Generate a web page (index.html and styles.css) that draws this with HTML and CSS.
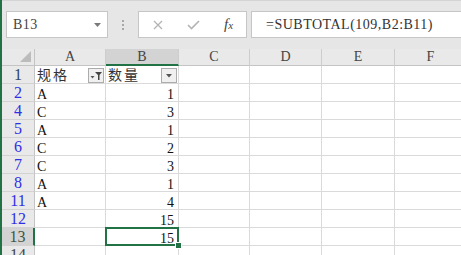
FILE: index.html
```html
<!DOCTYPE html>
<html lang="zh-CN">
<head>
    <meta charset="UTF-8">
    <title>筛选求和</title>
    <link rel="stylesheet" href="styles.css">
</head>
<body>
<div id="app">
    <div id="toolbar">
        <div id="namebox">
            <span>B13</span>
            <svg width="7" height="4" viewBox="0 0 7 4"><polygon points="0,0 7,0 3.5,4" fill="#7a7a7a"/></svg>
        </div>
        <div id="grip">
            <svg width="2" height="10" viewBox="0 0 2 10"><rect y="0" width="2" height="2" fill="#a8a8a8"/><rect y="4" width="2" height="2" fill="#a8a8a8"/><rect y="8" width="2" height="2" fill="#a8a8a8"/></svg>
        </div>
        <div id="fxbox">
            <svg class="cancel" width="10" height="10" viewBox="0 0 10 10"><path d="M1 1 L9 9 M9 1 L1 9" stroke="#b4b4b4" stroke-width="1.3" fill="none"/></svg>
            <svg class="enter" width="13" height="10" viewBox="0 0 13 10"><path d="M1 5 L4.5 8.5 L12 1" stroke="#b4b4b4" stroke-width="1.6" fill="none"/></svg>
            <span class="fx"><i>f</i><i class="fx-x">x</i></span>
        </div>
        <div id="formula">=SUBTOTAL(109,B2:B11)</div>
    </div>

    <div id="sheet">
        <div class="corner">
            <svg width="12" height="12" viewBox="0 0 12 12"><polygon points="11,0 11,11 0,11" fill="#bcbcbc"/></svg>
        </div>
        <div class="colhead">A</div>
        <div class="colhead selected">B</div>
        <div class="colhead">C</div>
        <div class="colhead">D</div>
        <div class="colhead">E</div>
        <div class="colhead">F</div>

        <div class="rowhead first">1</div>
        <div class="cell cjk filter-cell">规格<span class="fbtn"><svg width="14" height="13" viewBox="0 0 14 13"><polygon points="1.5,7 5.5,7 3.5,9.5" fill="#555"/><polygon points="6,3 13,3 10.5,6 10.5,11 9,11 9,6" fill="#444"/></svg></span></div>
        <div class="cell cjk filter-cell">数量<span class="fbtn"><svg width="14" height="13" viewBox="0 0 14 13"><polygon points="4,5 10,5 7,8.5" fill="#555"/></svg></span></div>
        <div class="cell"></div><div class="cell"></div><div class="cell"></div><div class="cell"></div>

        <div class="rowhead">2</div>
        <div class="cell">A</div><div class="cell num">1</div>
        <div class="cell"></div><div class="cell"></div><div class="cell"></div><div class="cell"></div>

        <div class="rowhead">4</div>
        <div class="cell">C</div><div class="cell num">3</div>
        <div class="cell"></div><div class="cell"></div><div class="cell"></div><div class="cell"></div>

        <div class="rowhead">5</div>
        <div class="cell">A</div><div class="cell num">1</div>
        <div class="cell"></div><div class="cell"></div><div class="cell"></div><div class="cell"></div>

        <div class="rowhead">6</div>
        <div class="cell">C</div><div class="cell num">2</div>
        <div class="cell"></div><div class="cell"></div><div class="cell"></div><div class="cell"></div>

        <div class="rowhead">7</div>
        <div class="cell">C</div><div class="cell num">3</div>
        <div class="cell"></div><div class="cell"></div><div class="cell"></div><div class="cell"></div>

        <div class="rowhead">8</div>
        <div class="cell">A</div><div class="cell num">1</div>
        <div class="cell"></div><div class="cell"></div><div class="cell"></div><div class="cell"></div>

        <div class="rowhead">11</div>
        <div class="cell">A</div><div class="cell num">4</div>
        <div class="cell"></div><div class="cell"></div><div class="cell"></div><div class="cell"></div>

        <div class="rowhead">12</div>
        <div class="cell"></div><div class="cell num">15</div>
        <div class="cell"></div><div class="cell"></div><div class="cell"></div><div class="cell"></div>

        <div class="rowhead selected">13</div>
        <div class="cell"></div><div class="cell num active">15</div>
        <div class="cell"></div><div class="cell"></div><div class="cell"></div><div class="cell"></div>

        <div class="rowhead last">14</div>
        <div class="cell"></div><div class="cell"></div>
        <div class="cell"></div><div class="cell"></div><div class="cell"></div><div class="cell"></div>
    </div>
</div>
</body>
</html>
```

FILE: styles.css
```css
/* Arkusz z autofiltrem */
body {
    margin: 0;
    background-color: #ffffff;
    font-family: "Liberation Serif", "Noto Sans CJK SC", serif;
    overflow: hidden;
}

#app {
    width: 461px;
    height: 255px;
    box-sizing: border-box;
    border-left: 2px solid #217346;
    overflow: hidden;
}

#toolbar {
    display: flex;
    align-items: flex-start;
    height: 49px;
    box-sizing: border-box;
    padding-top: 10px;
    border-top: 1px solid #d4d4d4;
    background-color: #e6e6e6;
}

#toolbar > div {
    flex: none;
}

#namebox {
    display: flex;
    align-items: center;
    justify-content: space-between;
    margin-left: 4px;
    width: 102px;
    height: 27px;
    box-sizing: border-box;
    padding: 0 6px;
    border: 1px solid #c6c6c6;
    background-color: #ffffff;
    font-size: 14px;
    letter-spacing: 0.5px;
    color: #444444;
}

#grip {
    display: flex;
    align-items: center;
    justify-content: center;
    width: 30px;
    height: 27px;
}

#fxbox {
    display: flex;
    align-items: center;
    width: 109px;
    height: 27px;
    box-sizing: border-box;
    padding-left: 14px;
    border: 1px solid #c6c6c6;
    background-color: #ffffff;
}

#fxbox .enter {
    margin-left: 24px;
}

.fx {
    margin-left: 24px;
    font-size: 15px;
    color: #444444;
}

.fx-x {
    font-size: 11px;
}

#formula {
    width: 230px;
    height: 27px;
    box-sizing: border-box;
    margin-left: 4px;
    padding-left: 14px;
    border: 1px solid #c6c6c6;
    background-color: #ffffff;
    font-size: 14px;
    letter-spacing: 0.5px;
    line-height: 25px;
    color: #333333;
    white-space: nowrap;
}

#sheet {
    display: grid;
    grid-template-columns: 33px 71px 73px 71px 72px 73px 72px;
    grid-template-rows: 17px;
    grid-auto-rows: 18px;
    font-size: 14px;
}

.corner {
    display: flex;
    align-items: flex-end;
    justify-content: flex-end;
    padding: 0 2px 2px 0;
    box-sizing: border-box;
    background-color: #e9e9e9;
    border-right: 1px solid #c4c4c4;
    border-bottom: 1px solid #c4c4c4;
}

.colhead {
    box-sizing: border-box;
    text-align: center;
    line-height: 16px;
    color: #444444;
    background-color: #e9e9e9;
    border-right: 1px solid #cdcdcd;
    border-bottom: 1px solid #c4c4c4;
}

.colhead.selected {
    background-color: #d3d3d3;
    border-bottom: 2px solid #217346;
    line-height: 15px;
}

.rowhead {
    box-sizing: border-box;
    text-align: center;
    font-size: 16px;
    line-height: 18px;
    color: #2f2fe6;
    background-color: #e9e9e9;
    border-right: 1px solid #c4c4c4;
    border-bottom: 1px solid #d2d2d2;
}

.rowhead.first {
    color: #2f4466;
}

.rowhead.last {
    color: #444444;
}

.rowhead.selected {
    color: #3b5747;
    background-color: #d3d3d3;
    border-right: 2px solid #217346;
}

.cell {
    position: relative;
    box-sizing: border-box;
    padding: 4px 2px 0;
    line-height: 14px;
    color: #111111;
    white-space: nowrap;
    border-right: 1px solid #dadada;
    border-bottom: 1px solid #dadada;
}

.cell.num {
    text-align: right;
    padding-right: 4px;
}

.cell.cjk {
    font-family: "Noto Sans CJK SC", sans-serif;
    letter-spacing: 2px;
    color: #333333;
}

.filter-cell {
    display: flex;
    justify-content: space-between;
    align-items: flex-end;
    padding: 0 1px 0 2px;
    line-height: 17px;
}

.fbtn {
    display: flex;
    align-items: center;
    justify-content: center;
    width: 16px;
    height: 15px;
    box-sizing: border-box;
    border: 1px solid #acacac;
    background-color: #f0f0f0;
}

.cell.active::after {
    content: "";
    position: absolute;
    top: -1px;
    left: -1px;
    right: -1px;
    bottom: -1px;
    border: 2px solid #217346;
}

.cell.active::before {
    content: "";
    position: absolute;
    right: -4px;
    bottom: -4px;
    width: 5px;
    height: 5px;
    background-color: #217346;
    border: 1px solid #ffffff;
    z-index: 1;
}
```
